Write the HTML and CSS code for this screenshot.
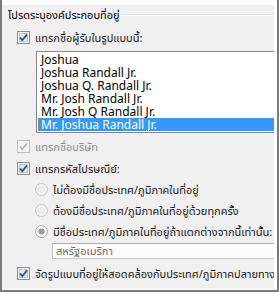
FILE: index.html
```html
<!DOCTYPE html>
<html>
<head>
    <meta charset="utf-8">
    <title>โปรดระบุองค์ประกอบที่อยู่</title>
    <link rel="stylesheet" href="styles.css">
</head>
<body>
    <div class="frame">
        <div class="panel">
            <div class="group-title">
                <span>โปรดระบุองค์ประกอบที่อยู่</span>
            </div>

            <div class="check-row first">
                <svg class="box" width="13" height="13" viewBox="0 0 13 13">
                    <rect x="0.5" y="0.5" width="12" height="12" fill="#f4f4f4" stroke="#8e8f8f"/>
                    <rect x="2.5" y="2.5" width="8" height="8" fill="#e6e6e6" stroke="#c4c4c4"/>
                    <path d="M3 6.5 L5.3 9.2 L10 3.4" fill="none" stroke="#2a4a9c" stroke-width="1.8"/>
                </svg>
                <span>แทรกชื่อผู้รับในรูปแบบนี้:</span>
            </div>

            <ul class="listbox">
                <li>Joshua</li>
                <li>Joshua Randall Jr.</li>
                <li>Joshua Q. Randall Jr.</li>
                <li>Mr. Josh Randall Jr.</li>
                <li>Mr. Josh Q Randall Jr.</li>
                <li class="selected">Mr. Joshua Randall Jr.</li>
            </ul>

            <div class="check-row disabled">
                <svg class="box" width="13" height="13" viewBox="0 0 13 13">
                    <rect x="0.5" y="0.5" width="12" height="12" fill="#f4f4f4" stroke="#c0c0c0"/>
                    <path d="M3 6.5 L5.3 9.2 L10 3.4" fill="none" stroke="#b4b4b4" stroke-width="1.6"/>
                </svg>
                <span>แทรกชื่อบริษัท</span>
            </div>

            <div class="check-row">
                <svg class="box" width="13" height="13" viewBox="0 0 13 13">
                    <rect x="0.5" y="0.5" width="12" height="12" fill="#f4f4f4" stroke="#8e8f8f"/>
                    <rect x="2.5" y="2.5" width="8" height="8" fill="#e6e6e6" stroke="#c4c4c4"/>
                    <path d="M3 6.5 L5.3 9.2 L10 3.4" fill="none" stroke="#2a4a9c" stroke-width="1.8"/>
                </svg>
                <span>แทรกรหัสไปรษณีย์:</span>
            </div>

            <div class="radios">
                <div class="radio-row">
                    <svg class="dot" width="13" height="13" viewBox="0 0 13 13">
                        <circle cx="6.5" cy="6.5" r="6" fill="#f6f6f6" stroke="#c3c3c3"/>
                        <circle cx="6.5" cy="6.5" r="4" fill="#ececec"/>
                    </svg>
                    <span>ไม่ต้องมีชื่อประเทศ/ภูมิภาคในที่อยู่</span>
                </div>
                <div class="radio-row">
                    <svg class="dot" width="13" height="13" viewBox="0 0 13 13">
                        <circle cx="6.5" cy="6.5" r="6" fill="#f6f6f6" stroke="#c3c3c3"/>
                        <circle cx="6.5" cy="6.5" r="4" fill="#ececec"/>
                    </svg>
                    <span>ต้องมีชื่อประเทศ/ภูมิภาคในที่อยู่ด้วยทุกครั้ง</span>
                </div>
                <div class="radio-row">
                    <svg class="dot" width="13" height="13" viewBox="0 0 13 13">
                        <circle cx="6.5" cy="6.5" r="6" fill="#f6f6f6" stroke="#a9a9a9"/>
                        <circle cx="6.5" cy="6.5" r="3" fill="#9a9a9a"/>
                    </svg>
                    <span>มีชื่อประเทศ/ภูมิภาคในที่อยู่ถ้าแตกต่างจากนี้เท่านั้น:</span>
                </div>
                <div class="textbox">สหรัฐอเมริกา</div>
            </div>

            <div class="check-row last">
                <svg class="box" width="13" height="13" viewBox="0 0 13 13">
                    <rect x="0.5" y="0.5" width="12" height="12" fill="#f4f4f4" stroke="#8e8f8f"/>
                    <rect x="2.5" y="2.5" width="8" height="8" fill="#e6e6e6" stroke="#c4c4c4"/>
                    <path d="M3 6.5 L5.3 9.2 L10 3.4" fill="none" stroke="#2a4a9c" stroke-width="1.8"/>
                </svg>
                <span>จัดรูปแบบที่อยู่ให้สอดคล้องกับประเทศ/ภูมิภาคปลายทาง</span>
            </div>
        </div>
    </div>
</body>
</html>
```

FILE: styles.css
```css
body {
    margin: 0;
    background: #fff;
    font-family: 'Noto Sans', 'Noto Sans Thai UI', 'Loma', 'Garuda', 'DejaVu Sans', sans-serif;
    font-size: 11px;
    color: #1a1a1a;
}

.frame {
    width: 279px;
    height: 292px;
    border: 2px solid #7a7a7a;
    border-top: none;
    padding-top: 5px;
    box-sizing: border-box;
    overflow: hidden;
}

.panel {
    background: #f0f0f0;
    margin-right: 3px;
    height: 284px;
    padding-left: 6px;
    overflow: hidden;
}

.group-title {
    display: flex;
    align-items: center;
    gap: 4px;
    height: 19px;
    white-space: nowrap;
    color: #000;
}

.group-title::after {
    content: '';
    flex: 1;
    border-top: 1px solid #d5dfe5;
    border-bottom: 1px solid #fff;
}

.check-row {
    display: flex;
    align-items: center;
    gap: 5px;
    height: 22px;
    padding-left: 9px;
    white-space: nowrap;
}

.check-row.first {
    margin-top: 2px;
    margin-bottom: 3px;
}

.check-row.disabled {
    color: #8d8d8d;
    margin-top: 2px;
}

.check-row.last {
    margin-top: 3px;
}

.box, .dot {
    flex: none;
}

.listbox {
    list-style: none;
    margin: 0 0 0 28px;
    padding: 1px 0 1px 1px;
    width: 260px;
    background: #fff;
    border: 1px solid #828790;
    font-size: 12px;
    line-height: 13px;
    color: #000;
}

.listbox li {
    padding-left: 3px;
    height: 13px;
}

.listbox .selected {
    background: #3399ff;
    color: #fff;
    outline: 1px dotted #e07020;
    outline-offset: -1px;
}

.radios {
    padding-left: 27px;
}

.radio-row {
    display: flex;
    align-items: center;
    gap: 5px;
    height: 21px;
    white-space: nowrap;
}

.textbox {
    margin: 1px 0 0 17px;
    width: 240px;
    height: 14px;
    padding-left: 3px;
    line-height: 14px;
    background: #fbfbfb;
    border: 1px solid #c5c5c5;
    border-top-color: #abadb3;
    color: #6d6d6d;
}
```
